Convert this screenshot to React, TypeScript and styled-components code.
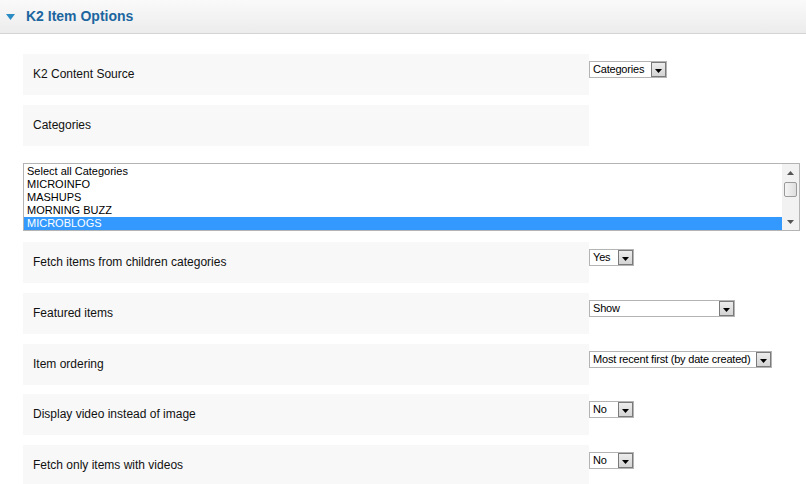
import React from "react";
import styled, { createGlobalStyle } from "styled-components";

const Global = createGlobalStyle`
  html, body { margin: 0; padding: 0; background: #fff; }
  body { font-family: "Liberation Sans", Arial, sans-serif; width: 806px; height: 484px; overflow: hidden; }
`;

const Header = styled.div`
  height: 33px;
  border-bottom: 1px solid #d4d4d4;
  background: linear-gradient(#fafafa, #ececec);
  display: flex;
  align-items: center;
  padding-left: 6px;
  gap: 11px;
`;

const Title = styled.span`
  font-weight: bold;
  font-size: 14px;
  color: #1c66a0;
  line-height: 16px;
  margin-top: -1px;
`;

const Content = styled.div`
  padding: 20px 6px 0 23px;
  display: flex;
  flex-direction: column;
`;

const Row = styled.div<{ $mt?: number }>`
  display: flex;
  margin-top: ${(p) => p.$mt ?? 0}px;
`;

const Label = styled.div`
  width: 566px;
  height: 41px;
  box-sizing: border-box;
  padding-left: 10px;
  padding-bottom: 1px;
  background: #f8f8f8;
  display: flex;
  align-items: center;
  font-size: 12px;
  color: #111;
`;

const Control = styled.div`
  padding-top: 7px;
`;

const Select = styled.div<{ $w: number }>`
  width: ${(p) => p.$w}px;
  height: 17px;
  box-sizing: border-box;
  border: 1px solid #b4b4b4;
  background: #fff;
  display: flex;
  align-items: stretch;
  font-size: 11px;
  color: #000;
`;

const SelectText = styled.span`
  flex: 1;
  padding-left: 3px;
  line-height: 15px;
  letter-spacing: -0.2px;
  white-space: nowrap;
  overflow: hidden;
`;

const Arrow = styled.span`
  width: 15px;
  box-sizing: border-box;
  border: 1px solid #7a7a7a;
  background: linear-gradient(#ececec, #d4d4d4);
  display: flex;
  align-items: flex-end;
  justify-content: center;
  padding-bottom: 3px;
`;

const ListBox = styled.div`
  margin-top: 17px;
  width: 777px;
  height: 68px;
  box-sizing: border-box;
  border: 1px solid #b4b4b4;
  display: flex;
  background: #fff;
`;

const Options = styled.div`
  flex: 1;
  padding-top: 1px;
`;

const Option = styled.div<{ $sel?: boolean }>`
  height: 13px;
  line-height: 13px;
  font-size: 11px;
  padding-left: 3px;
  color: ${(p) => (p.$sel ? "#fff" : "#000")};
  background: ${(p) => (p.$sel ? "#3399ff" : "transparent")};
`;

const Scrollbar = styled.div`
  width: 17px;
  background: #f2f2f2;
  display: flex;
  flex-direction: column;
  align-items: center;
`;

const ScrollBtn = styled.div`
  height: 17px;
  display: flex;
  align-items: center;
  justify-content: center;
`;

const Thumb = styled.div`
  width: 13px;
  height: 15px;
  box-sizing: border-box;
  border: 1px solid #9a9a9a;
  border-radius: 2px;
  background: linear-gradient(90deg, #f4f4f4, #dedede);
  margin-top: 1px;
`;

const Spacer = styled.div`
  flex: 1;
`;

const Tri = ({ up = false, color = "#000" }: { up?: boolean; color?: string }) => (
  <svg width="7" height="4" viewBox="0 0 7 4">
    <polygon points={up ? "3.5,0 7,4 0,4" : "0,0 7,0 3.5,4"} fill={color} />
  </svg>
);

const Drop = ({ w, value }: { w: number; value: string }) => (
  <Select $w={w}>
    <SelectText>{value}</SelectText>
    <Arrow>
      <Tri />
    </Arrow>
  </Select>
);

const cats = ["Select all Categories", "MICROINFO", "MASHUPS", "MORNING BUZZ", "MICROBLOGS"];

export default function App() {
  return (
    <>
      <Global />
      <Header>
        <svg width="9" height="6" viewBox="0 0 9 6">
          <polygon points="0,0 9,0 4.5,6" fill="#2b8cc4" />
        </svg>
        <Title>K2 Item Options</Title>
      </Header>
      <Content>
        <Row>
          <Label>K2 Content Source</Label>
          <Control>
            <Drop w={78} value="Categories" />
          </Control>
        </Row>
        <Row $mt={10}>
          <Label>Categories</Label>
        </Row>
        <ListBox>
          <Options>
            {cats.map((c, i) => (
              <Option key={c} $sel={i === 4}>
                {c}
              </Option>
            ))}
          </Options>
          <Scrollbar>
            <ScrollBtn>
              <Tri up color="#555" />
            </ScrollBtn>
            <Thumb />
            <Spacer />
            <ScrollBtn>
              <Tri color="#555" />
            </ScrollBtn>
          </Scrollbar>
        </ListBox>
        <Row $mt={11}>
          <Label>Fetch items from children categories</Label>
          <Control>
            <Drop w={45} value="Yes" />
          </Control>
        </Row>
        <Row $mt={10}>
          <Label>Featured items</Label>
          <Control>
            <Drop w={146} value="Show" />
          </Control>
        </Row>
        <Row $mt={10}>
          <Label>Item ordering</Label>
          <Control>
            <Drop w={183} value="Most recent first (by date created)" />
          </Control>
        </Row>
        <Row $mt={9}>
          <Label>Display video instead of image</Label>
          <Control>
            <Drop w={45} value="No" />
          </Control>
        </Row>
        <Row $mt={10}>
          <Label>Fetch only items with videos</Label>
          <Control>
            <Drop w={45} value="No" />
          </Control>
        </Row>
      </Content>
    </>
  );
}
